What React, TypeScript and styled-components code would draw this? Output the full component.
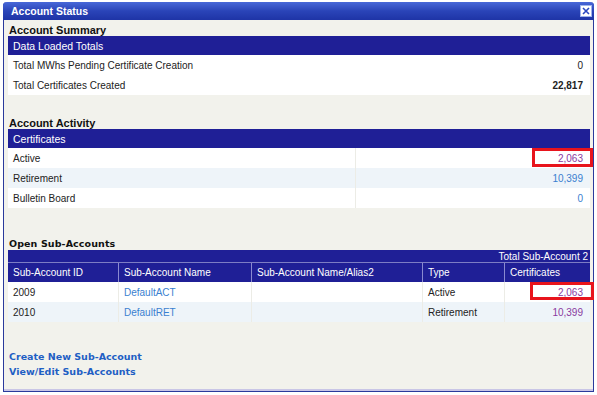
import React from "react";
import styled, { createGlobalStyle } from "styled-components";

const Global = createGlobalStyle`
  html, body { margin: 0; padding: 0; background: #ffffff; }
  body { font-family: "Liberation Sans", Arial, sans-serif; }
`;

const Window = styled.div`
  margin: 2px 0 0 3px;
  width: 591px;
  height: 390px;
  box-sizing: border-box;
  border: 1px solid #2a3a9c;
  border-top: none;
  border-radius: 4px 4px 0 0;
  background: #f2f2ec;
  display: flex;
  flex-direction: column;
  box-shadow: inset 0 -2px 0 #c9c6e6;
`;

const TitleBar = styled.div`
  height: 18px;
  margin: 0 -1px;
  border-radius: 4px 4px 0 0;
  background: linear-gradient(#4868d8, #2a44b8 50%, #1e34a6);
  display: flex;
  align-items: center;
  justify-content: space-between;
  padding: 0 2px 0 8px;
  color: #fff;
  font-weight: bold;
  font-size: 10.5px;
`;

const Close = styled.div`
  width: 12px;
  height: 12px;
  display: flex;
`;

const Content = styled.div`
  padding: 3px 3px 0 4px;
  display: flex;
  flex-direction: column;
`;

const SectionTitle = styled.div<{ $top: number; $wide?: boolean }>`
  margin-top: ${(p) => p.$top}px;
  height: 12px;
  line-height: 12px;
  font-weight: bold;
  color: #111;
  font-size: ${(p) => (p.$wide ? "9.5px" : "11px")};
  font-family: ${(p) =>
    p.$wide ? `"DejaVu Sans", Verdana, sans-serif` : `"Liberation Sans", Arial, sans-serif`};
  letter-spacing: ${(p) => (p.$wide ? "0.1px" : "0")};
  padding-left: 1px;
`;

const Table = styled.div`
  display: flex;
  flex-direction: column;
  font-size: 10px;
  color: #222;
`;

const HeadBar = styled.div`
  height: 19px;
  background: #1f1f96;
  color: #fff;
  display: flex;
  align-items: center;
  padding-left: 5px;
  font-size: 10.5px;
`;

const TotalBar = styled.div`
  height: 12px;
  background: #1f1f96;
  color: #fff;
  display: flex;
  align-items: center;
  justify-content: flex-end;
  padding-right: 2px;
  font-size: 10px;
  border-bottom: 1px solid #7d7dc4;
`;

const Row = styled.div<{ $cols: string; $alt?: boolean; $head?: boolean }>`
  display: grid;
  grid-template-columns: ${(p) => p.$cols};
  height: ${(p) => (p.$head ? "19px" : "20px")};
  background: ${(p) => (p.$head ? "#1f1f96" : p.$alt ? "#eef4f9" : "#ffffff")};
  color: ${(p) => (p.$head ? "#ffffff" : "#222")};
`;

const Cell = styled.div<{ $right?: boolean; $div?: boolean; $head?: boolean }>`
  position: relative;
  display: flex;
  align-items: center;
  justify-content: ${(p) => (p.$right ? "flex-end" : "flex-start")};
  padding: 0 ${(p) => (p.$right ? "7px" : "5px")};
  border-left: ${(p) =>
    p.$div ? (p.$head ? "1px solid #8a8ad0" : "1px solid #ecece6") : "none"};
  white-space: nowrap;
`;

const Value = styled.span<{ $color?: string; $bold?: boolean }>`
  color: ${(p) => p.$color || "#222"};
  font-weight: ${(p) => (p.$bold ? "bold" : "normal")};
`;

const Highlight = styled.div<{ $w: number; $h: number; $right: number; $top: number }>`
  position: absolute;
  right: ${(p) => p.$right}px;
  top: ${(p) => p.$top}px;
  width: ${(p) => p.$w}px;
  height: ${(p) => p.$h}px;
  box-sizing: border-box;
  border: 3px solid #e8141c;
  pointer-events: none;
`;

const Links = styled.div`
  margin-top: 29px;
  display: flex;
  flex-direction: column;
  gap: 3px;
  padding-left: 1px;
`;

const Link = styled.a`
  color: #1f5fc4;
  font-family: "DejaVu Sans", Verdana, sans-serif;
  font-weight: bold;
  font-size: 9.5px;
  line-height: 12px;
  text-decoration: none;
`;

const PURPLE = "#8a3aa0";
const BLUE = "#3a7fd0";
const SUB_COLS = "110px 133px 171px 82px 1fr";

export default function App() {
  return (
    <>
      <Global />
      <Window>
        <TitleBar>
          <span>Account Status</span>
          <Close>
            <svg width="12" height="12" viewBox="0 0 12 12">
              <rect x="0.5" y="0.5" width="11" height="11" fill="#ffffff" stroke="#9fb4ec" />
              <path d="M3 3 L9 9 M9 3 L3 9" stroke="#2a48c0" strokeWidth="1.6" />
            </svg>
          </Close>
        </TitleBar>
        <Content>
          <SectionTitle $top={1}>Account Summary</SectionTitle>
          <Table>
            <HeadBar>Data Loaded Totals</HeadBar>
            <Row $cols="1fr auto">
              <Cell>Total MWhs Pending Certificate Creation</Cell>
              <Cell $right>
                <Value>0</Value>
              </Cell>
            </Row>
            <Row $cols="1fr auto">
              <Cell>Total Certificates Created</Cell>
              <Cell $right>
                <Value $bold>22,817</Value>
              </Cell>
            </Row>
          </Table>

          <SectionTitle $top={22}>Account Activity</SectionTitle>
          <Table>
            <HeadBar>Certificates</HeadBar>
            <Row $cols="347px 1fr">
              <Cell>Active</Cell>
              <Cell $right $div>
                <Value $color={PURPLE}>2,063</Value>
                <Highlight $w={61} $h={19} $right={-3} $top={0} />
              </Cell>
            </Row>
            <Row $cols="347px 1fr" $alt>
              <Cell>Retirement</Cell>
              <Cell $right $div>
                <Value $color={BLUE}>10,399</Value>
              </Cell>
            </Row>
            <Row $cols="347px 1fr">
              <Cell>Bulletin Board</Cell>
              <Cell $right $div>
                <Value $color={BLUE}>0</Value>
              </Cell>
            </Row>
          </Table>

          <SectionTitle $top={30} $wide>
            Open Sub-Accounts
          </SectionTitle>
          <Table>
            <TotalBar>Total Sub-Account 2</TotalBar>
            <Row $cols={SUB_COLS} $head>
              <Cell>Sub-Account ID</Cell>
              <Cell $div $head>Sub-Account Name</Cell>
              <Cell $div $head>Sub-Account Name/Alias2</Cell>
              <Cell $div $head>Type</Cell>
              <Cell $div $head>Certificates</Cell>
            </Row>
            <Row $cols={SUB_COLS}>
              <Cell>2009</Cell>
              <Cell $div>
                <Value $color={BLUE}>DefaultACT</Value>
              </Cell>
              <Cell $div></Cell>
              <Cell $div>Active</Cell>
              <Cell $div $right>
                <Value $color={PURPLE}>2,063</Value>
                <Highlight $w={64} $h={18} $right={-4} $top={0} />
              </Cell>
            </Row>
            <Row $cols={SUB_COLS} $alt>
              <Cell>2010</Cell>
              <Cell $div>
                <Value $color={BLUE}>DefaultRET</Value>
              </Cell>
              <Cell $div></Cell>
              <Cell $div>Retirement</Cell>
              <Cell $div $right>
                <Value $color={PURPLE}>10,399</Value>
              </Cell>
            </Row>
          </Table>

          <Links>
            <Link href="#">Create New Sub-Account</Link>
            <Link href="#">View/Edit Sub-Accounts</Link>
          </Links>
        </Content>
      </Window>
    </>
  );
}
